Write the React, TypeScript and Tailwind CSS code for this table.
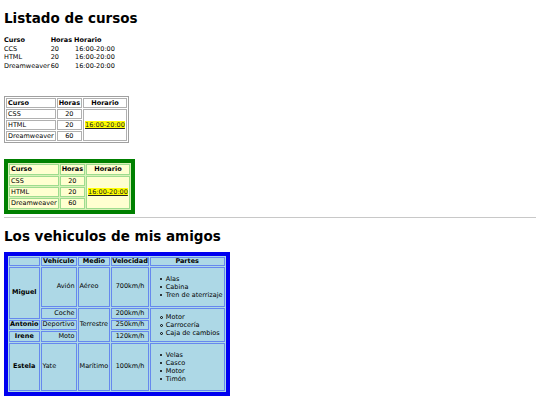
import React from 'react'

const cursos = [
  { nombre: 'CSS', horas: 20 },
  { nombre: 'HTML', horas: 20 },
  { nombre: 'Dreamweaver', horas: 60 },
]

function TablaSimple() {
  const filas = [
    { nombre: 'CCS', horas: 20 },
    { nombre: 'HTML', horas: 20 },
    { nombre: 'Dreamweaver', horas: 60 },
  ]
  return (
    <table className="mt-[9px] border-separate border-spacing-x-0 border-spacing-y-[1px] text-[6.5px] leading-[7.6px]">
      <thead>
        <tr>
          <th className="text-left pr-[1px]">Curso</th>
          <th className="text-left pr-[1px]">Horas</th>
          <th className="text-left pl-[1px]">Horario</th>
        </tr>
      </thead>
      <tbody>
        {filas.map((f) => (
          <tr key={f.nombre}>
            <td className="pr-[1px]">{f.nombre}</td>
            <td className="pr-[1px]">{f.horas}</td>
            <td className="pl-[2px]">16:00-20:00</td>
          </tr>
        ))}
      </tbody>
    </table>
  )
}

function Resaltado() {
  return <span className="bg-[#ffff00] underline text-[#222]">16:00-20:00</span>
}

function TablaBorde() {
  const cell = 'border border-[#b0b0b0] px-px py-0'
  return (
    <table className="mt-[25px] border-separate border-spacing-[1px] border border-[#a0a0a0] text-[6.5px] leading-[8px]">
      <thead>
        <tr>
          <th className={`${cell} text-left`}>Curso</th>
          <th className={cell}>Horas</th>
          <th className={`${cell} text-center`}>Horario</th>
        </tr>
      </thead>
      <tbody>
        {cursos.map((c, i) => (
          <tr key={c.nombre}>
            <td className={cell}>{c.nombre}</td>
            <td className={`${cell} text-center`}>{c.horas}</td>
            {i === 0 && (
              <td rowSpan={3} className={`${cell} text-center`}>
                <Resaltado />
              </td>
            )}
          </tr>
        ))}
      </tbody>
    </table>
  )
}

function TablaVerde() {
  const cell = 'border border-[#9edc8e] bg-[#ffffd0] px-px py-0'
  return (
    <table className="mt-[16px] border-separate border-spacing-[1px] border-[4px] border-[#008000] bg-[#d8f0b8] text-[6.5px] leading-[8.3px]">
      <thead>
        <tr>
          <th className={`${cell} text-left`}>Curso</th>
          <th className={cell}>Horas</th>
          <th className={`${cell} text-center`}>Horario</th>
        </tr>
      </thead>
      <tbody>
        {cursos.map((c, i) => (
          <tr key={c.nombre}>
            <td className={cell}>{c.nombre}</td>
            <td className={`${cell} text-center`}>{c.horas}</td>
            {i === 0 && (
              <td rowSpan={3} className={`${cell} text-center`}>
                <Resaltado />
              </td>
            )}
          </tr>
        ))}
      </tbody>
    </table>
  )
}

function Lista({ items, circulo }: { items: string[]; circulo?: boolean }) {
  return (
    <ul className={`${circulo ? 'my-[4px]' : 'my-[7px]'} pl-[8px] leading-[8px]`}>
      {items.map((it) => (
        <li key={it} className="flex items-center">
          <span className="flex w-[6px] shrink-0 items-center">
            {circulo ? (
              <span className="h-[3px] w-[3px] rounded-full border-[0.7px] border-black" />
            ) : (
              <span className="h-[2.5px] w-[2.5px] rounded-full bg-black" />
            )}
          </span>
          <span>{it}</span>
        </li>
      ))}
    </ul>
  )
}

function TablaVehiculos() {
  const cell = 'border border-[#6688ee] px-px py-0'
  const head = 'border border-[#6688ee] px-0 py-0'
  return (
    <table className="mt-[7px] border-separate border-spacing-x-[1.5px] border-spacing-y-[1.5px] border-[4px] border-[#0000f0] bg-[#add8e6] text-[6.5px] leading-[7.6px]">
      <thead>
        <tr>
          <th className={head}></th>
          <th className={head}>Vehículo</th>
          <th className={head}>Medio</th>
          <th className={head}>Velocidad</th>
          <th className={head}>Partes</th>
        </tr>
      </thead>
      <tbody>
        <tr>
          <th rowSpan={2} className={head}>Miguel</th>
          <td className={`${cell} text-right`}>Avión</td>
          <td className={`${cell} text-left`}>Aéreo</td>
          <td className={`${cell} text-center`}>700km/h</td>
          <td className={cell}>
            <Lista items={['Alas', 'Cabina', 'Tren de aterrizaje']} />
          </td>
        </tr>
        <tr>
          <td className={`${cell} text-right`}>Coche</td>
          <td rowSpan={3} className={`${cell} text-center`}>Terrestre</td>
          <td className={`${cell} text-center`}>200km/h</td>
          <td rowSpan={3} className={cell}>
            <Lista circulo items={['Motor', 'Carrocería', 'Caja de cambios']} />
          </td>
        </tr>
        <tr>
          <th className={head}>Antonio</th>
          <td className={`${cell} text-right`}>Deportivo</td>
          <td className={`${cell} text-center`}>250km/h</td>
        </tr>
        <tr>
          <th className={head}>Irene</th>
          <td className={`${cell} text-right`}>Moto</td>
          <td className={`${cell} text-center`}>120km/h</td>
        </tr>
        <tr>
          <th className={head}>Estela</th>
          <td className={`${cell} text-left`}>Yate</td>
          <td className={`${cell} text-left`}>Marítimo</td>
          <td className={`${cell} text-center`}>100km/h</td>
          <td className={cell}>
            <Lista items={['Velas', 'Casco', 'Motor', 'Timón']} />
          </td>
        </tr>
      </tbody>
    </table>
  )
}

export default function App() {
  return (
    <div className="w-[540px] h-[405px] overflow-hidden bg-white px-[4px] pt-[9px] font-['DejaVu_Sans',sans-serif] text-black">
      <h1 className="text-[13.5px] leading-[18px] font-bold">Listado de cursos</h1>
      <TablaSimple />
      <TablaBorde />
      <TablaVerde />
      <hr className="mt-[3px] border-t border-[#c8c8c8]" />
      <h2 className="mt-[9px] text-[13.5px] leading-[18px] font-bold">Los vehiculos de mis amigos</h2>
      <TablaVehiculos />
    </div>
  )
}
